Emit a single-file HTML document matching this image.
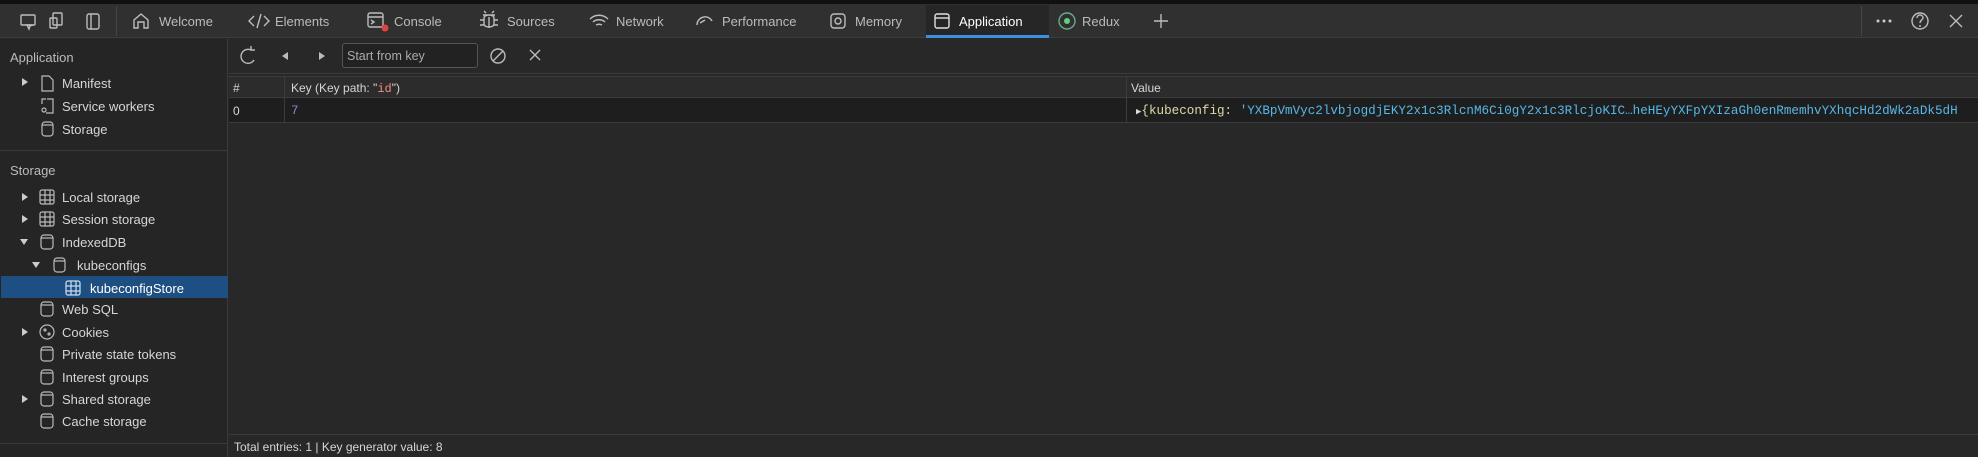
<!DOCTYPE html><html><head><meta charset="utf-8"><style>
*{margin:0;padding:0;box-sizing:border-box}
body{width:1978px;height:457px;background:#282828;font-family:"Liberation Sans",sans-serif;font-size:13px;color:#d6d6d6;position:relative;overflow:hidden}
.a{position:absolute;white-space:nowrap}
svg{position:absolute;overflow:visible}
.mono{font-family:"Liberation Mono",monospace;font-size:12.6px}
</style></head><body>
<div class="a" style="left:0;top:0;width:1978px;height:4px;background:#111"></div>
<div class="a" style="left:0;top:4px;width:1978px;height:34px;background:#303030;border-bottom:1px solid #3c3c3c"></div>
<div class="a" style="left:116px;top:6px;width:1px;height:30px;background:#454545"></div>
<div class="a" style="left:1861px;top:6px;width:1px;height:30px;background:#454545"></div>
<svg style="left:0;top:0" width="1978" height="38" fill="none" stroke="#bdbdbd" stroke-width="1.4">
<rect x="21" y="15" width="14" height="10" rx="1"/><path d="M27 25l2 4 1-3 3-1z"/>
<rect x="53" y="13" width="9" height="12" rx="1"/><rect x="50" y="18" width="7" height="10" rx="1"/>
<rect x="87" y="14" width="12" height="15" rx="2"/><path d="M91 14v15"/>
<path d="M134 28v-8l7-6 7 6v8h-4v-6h-6v6z"/>
<path d="M254 16l-5 5 5 5M264 16l5 5-5 5M261 14l-4 14"/>
<rect x="368" y="13" width="15" height="14" rx="2"/><path d="M368 17h15M371 20l3 2-3 2"/>
<path d="M483 15h12M486 13l-2-2M492 13l2-2M484 18c0-4 10-4 10 0v6c0 4-10 4-10 0zM489 17v11M480 20h4M494 20h4M480 25h4M494 25h4"/>
<path d="M590 19c5-5 13-5 18 0M593 22c3-3 9-3 12 0M596 25c2-1 4-1 6 0"/>
<path d="M697 25a8 8 0 0 1 15-4M700 23l5-3"/>
<rect x="831" y="14" width="14" height="14" rx="3"/><circle cx="838" cy="21" r="3"/>
<circle cx="1067" cy="21" r="8" stroke="#6a8"/>
<path d="M1161 14v14M1154 21h14"/>
<circle cx="1920" cy="21" r="8"/><path d="M1917 18c0-4 6-4 6 0 0 2-3 2-3 5"/>
<path d="M1950 15l12 12M1962 15l-12 12"/>
</svg>
<svg style="left:0;top:0" width="1978" height="38"><circle cx="385" cy="28" r="3.5" fill="#e0443e"/><circle cx="1067" cy="21" r="3" fill="#5fd07f"/><circle cx="1920" cy="26" r="1" fill="#bdbdbd"/>
<circle cx="1878" cy="21" r="1.5" fill="#ccc"/><circle cx="1884" cy="21" r="1.5" fill="#ccc"/><circle cx="1890" cy="21" r="1.5" fill="#ccc"/></svg>
<div class="a" style="left:159px;top:14px;color:#bbb">Welcome</div>
<div class="a" style="left:275px;top:14px;color:#bbb">Elements</div>
<div class="a" style="left:394px;top:14px;color:#bbb">Console</div>
<div class="a" style="left:507px;top:14px;color:#bbb">Sources</div>
<div class="a" style="left:616px;top:14px;color:#bbb">Network</div>
<div class="a" style="left:722px;top:14px;color:#bbb">Performance</div>
<div class="a" style="left:855px;top:14px;color:#bbb">Memory</div>
<div class="a" style="left:926px;top:5px;width:123px;height:33px;background:#262626"></div>
<div class="a" style="left:926px;top:35px;width:123px;height:3px;background:#3b8fde"></div>
<svg style="left:0;top:0" width="1978" height="38" fill="none" stroke="#e0e0e0" stroke-width="1.4"><rect x="935" y="14" width="14" height="14" rx="2"/><path d="M935 18h14"/></svg>
<div class="a" style="left:959px;top:14px;color:#fff">Application</div>
<div class="a" style="left:1082px;top:14px;color:#bbb">Redux</div>

<!-- sidebar -->
<div class="a" style="left:0;top:39px;width:228px;height:418px;background:#252525;border-right:1px solid #3a3a3a"></div>
<div class="a" style="left:0;top:150px;width:228px;height:1px;background:#3a3a3a"></div>
<div class="a" style="left:0;top:443px;width:228px;height:1px;background:#3a3a3a"></div>
<div class="a" style="left:10px;top:50px;color:#bbb">Application</div>
<div class="a" style="left:10px;top:163px;color:#bbb">Storage</div>
<div class="a" style="left:1px;top:276px;width:227px;height:22px;background:#1d4f82"></div>
<svg style="left:0;top:0" width="228" height="457" fill="#ccc">
<path d="M22 78l6 4-6 4zM22 193l6 4-6 4zM22 215l6 4-6 4zM20 239l8 0-4 6zM32 262l8 0-4 6zM22 328l6 4-6 4zM22 395l6 4-6 4z"/>
<g fill="none" stroke="#bbb" stroke-width="1.2">
<path d="M42 76h7l4 4v11h-11z"/>
<path d="M47 99h6v14h-7M42 104v-5h4"/><circle cx="44" cy="110" r="2"/>
<rect x="42" y="122" width="11" height="14" rx="3"/><path d="M42 125h11"/>
<rect x="40" y="190" width="14" height="14" rx="2"/><path d="M40 195h14M40 200h14M45 190v14M50 190v14"/>
<rect x="40" y="212" width="14" height="14" rx="2"/><path d="M40 217h14M40 222h14M45 212v14M50 212v14"/>
<rect x="41" y="235" width="12" height="14" rx="3"/><path d="M41 238h12"/>
<rect x="54" y="258" width="11" height="14" rx="3"/><path d="M54 261h11"/>
<rect x="66" y="281" width="14" height="14" rx="2" stroke="#cde"/><path d="M66 286h14M66 291h14M71 281v14M76 281v14" stroke="#cde"/>
<rect x="41" y="302" width="12" height="14" rx="3"/><path d="M41 305h12"/>
<circle cx="47" cy="332" r="7"/><circle cx="45" cy="330" r="1"/><circle cx="49" cy="334" r="1"/>
<rect x="41" y="347" width="12" height="14" rx="3"/><path d="M41 350h12"/>
<rect x="41" y="370" width="12" height="14" rx="3"/><path d="M41 373h12"/>
<rect x="41" y="392" width="12" height="14" rx="3"/><path d="M41 395h12"/>
<rect x="41" y="414" width="12" height="14" rx="3"/><path d="M41 417h12"/>
</g></svg>
<div class="a" style="left:62px;top:76px">Manifest</div>
<div class="a" style="left:62px;top:99px">Service workers</div>
<div class="a" style="left:62px;top:122px">Storage</div>
<div class="a" style="left:62px;top:190px">Local storage</div>
<div class="a" style="left:62px;top:212px">Session storage</div>
<div class="a" style="left:62px;top:235px">IndexedDB</div>
<div class="a" style="left:77px;top:258px">kubeconfigs</div>
<div class="a" style="left:90px;top:281px;color:#fff">kubeconfigStore</div>
<div class="a" style="left:62px;top:302px">Web SQL</div>
<div class="a" style="left:62px;top:325px">Cookies</div>
<div class="a" style="left:62px;top:347px">Private state tokens</div>
<div class="a" style="left:62px;top:370px">Interest groups</div>
<div class="a" style="left:62px;top:392px">Shared storage</div>
<div class="a" style="left:62px;top:414px">Cache storage</div>

<!-- toolbar -->
<div class="a" style="left:229px;top:73px;width:1749px;height:1px;background:#3c3c3c"></div>
<svg style="left:0;top:0" width="700" height="80" fill="none" stroke="#bbb" stroke-width="1.4">
<path d="M254 60a7 7 0 1 1-3-10M251 46v4h4"/>
<path d="M288 60l-6-4 6-4z" fill="#bbb" stroke="none"/><path d="M319 52l6 4-6 4z" fill="#bbb" stroke="none"/>
<circle cx="498" cy="56" r="7"/><path d="M493 61l10-10"/>
<path d="M530 50l10 10M540 50l-10 10"/>
</svg>
<div class="a" style="left:342px;top:43px;width:136px;height:25px;border:1px solid #555;border-radius:3px;background:#222;padding:5px 4px;font-size:12.5px;color:#aaa">Start from key</div>

<!-- table -->
<div class="a" style="left:229px;top:76px;width:1749px;height:22px;background:#2c2c2c;border-top:1px solid #3c3c3c;border-bottom:1px solid #3c3c3c"></div>
<div class="a" style="left:229px;top:98px;width:1749px;height:25px;background:#1e1e1e;border-bottom:1px solid #3c3c3c"></div>
<div class="a" style="left:284px;top:76px;width:1px;height:47px;background:#3c3c3c"></div>
<div class="a" style="left:1126px;top:76px;width:1px;height:47px;background:#3c3c3c"></div>
<div class="a" style="left:233px;top:81px;font-size:12px">#</div>
<div class="a" style="left:291px;top:81px;font-size:12px">Key (Key path: "<span class="mono" style="font-size:12px;color:#f28b82">id</span>")</div>
<div class="a" style="left:1131px;top:81px;font-size:12px">Value</div>
<div class="a" style="left:233px;top:104px;font-size:12px">0</div>
<div class="a mono" style="left:291px;top:104px;color:#9a7fd5">7</div>
<div class="a mono" style="left:1136px;top:104px;color:#ddd"><span style="font-size:9px">▶</span><span style="color:#e0d9a8">{kubeconfig:</span> <span style="color:#56b8e6">'YXBpVmVyc2lvbjogdjEKY2x1c3RlcnM6Ci0gY2x1c3RlcjoKIC…heHEyYXFpYXIzaGh0enRmemhvYXhqcHd2dWk2aDk5dH</span></div>

<div class="a" style="left:229px;top:434px;width:1749px;height:1px;background:#3c3c3c"></div>
<div class="a" style="left:234px;top:440px;font-size:12px">Total entries: 1 | Key generator value: 8</div>
</body></html>
